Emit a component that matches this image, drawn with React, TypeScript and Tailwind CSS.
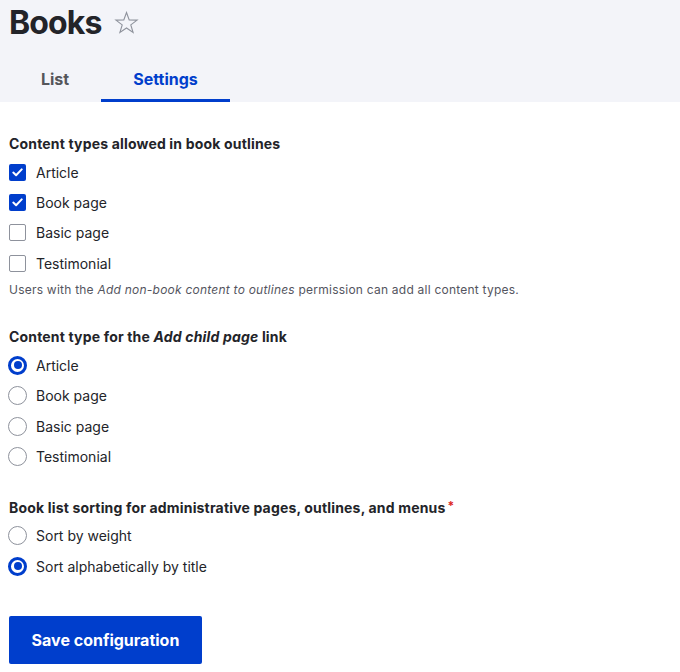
import React from "react";

const font = { fontFamily: "Inter, 'Noto Sans', sans-serif" };

function Checkbox({ checked }: { checked?: boolean }) {
  return checked ? (
    <div className="w-[17px] h-[17px] rounded-[2px] bg-[#003ecc] flex items-center justify-center shrink-0">
      <svg width="11" height="9" viewBox="0 0 11 9" fill="none">
        <path d="M1.3 4.6 L4.1 7.2 L9.7 1.4" stroke="white" strokeWidth="2" strokeLinecap="round" strokeLinejoin="round" />
      </svg>
    </div>
  ) : (
    <div className="w-[17px] h-[17px] rounded-[2px] border border-[#8e929c] bg-white shrink-0" />
  );
}

function Radio({ checked }: { checked?: boolean }) {
  return checked ? (
    <div className="w-[19px] h-[19px] rounded-full border-[3px] border-[#003ecc] flex items-center justify-center shrink-0">
      <div className="w-[8px] h-[8px] rounded-full bg-[#003ecc]" />
    </div>
  ) : (
    <div className="w-[19px] h-[19px] rounded-full border border-[#8e929c] bg-white shrink-0" />
  );
}

function Row({ children, label, radio }: { children: React.ReactNode; label: string; radio?: boolean }) {
  return (
    <div className={`h-[30.33px] flex items-center ${radio ? "gap-[9px] pl-[8px]" : "gap-[10px] pl-[9px]"}`}>
      {children}
      <span className="text-[14px] text-[#232429]">{label}</span>
    </div>
  );
}

export default function App() {
  return (
    <div className="w-[680px] h-[672px] bg-white overflow-hidden" style={font}>
      <div className="bg-[#f3f4f9] h-[102px] flex flex-col">
        <div className="flex items-center pl-[9px] pt-[5px] h-[40px]">
          <h1 className="text-[32px] font-bold leading-[38px] text-[#232429] tracking-[-0.9px]">Books</h1>
          <svg className="ml-[13px] mt-[1px]" width="25" height="24" viewBox="0 0 25 24" fill="none">
            <path
              d="M12.5 1.5 L15.2 8.9 L23.1 9.1 L16.8 13.9 L19.1 21.5 L12.5 17 L5.9 21.5 L8.2 13.9 L1.9 9.1 L9.8 8.9 Z"
              stroke="#8e929c"
              strokeWidth="1.1"
              strokeLinejoin="miter"
            />
          </svg>
        </div>
        <div className="flex pl-[9px] mt-auto">
          <div className="w-[92px] h-[48px] flex items-center justify-center text-[16px] font-bold text-[#55565b] pt-[2px]">List</div>
          <div className="w-[129px] h-[48px] flex flex-col">
            <div className="flex-1 flex items-center justify-center text-[16px] font-bold text-[#003ecc] pt-[5px]">Settings</div>
            <div className="h-[3px] bg-[#003ecc]" />
          </div>
        </div>
      </div>

      <div className="pt-[32px]">
        <div className="pl-[9px] h-[20px] leading-[20px] text-[14px] font-bold text-[#232429] tracking-[0.17px]">Content types allowed in book outlines</div>
        <div className="mt-[3px] flex flex-col">
          <Row label="Article"><Checkbox checked /></Row>
          <Row label="Book page"><Checkbox checked /></Row>
          <Row label="Basic page"><Checkbox /></Row>
          <Row label="Testimonial"><Checkbox /></Row>
        </div>
        <div className="pl-[9px] mt-[3px] h-[18px] leading-[18px] text-[12px] text-[#545560] tracking-[0.23px]">
          Users with the <em>Add non-book content to outlines</em> permission can add all content types.
        </div>

        <div className="mt-[28px] pl-[9px] h-[20px] leading-[20px] text-[14px] font-bold text-[#232429] tracking-[0.17px]">
          Content type for the <em>Add child page</em> link
        </div>
        <div className="mt-[3px] flex flex-col">
          <Row radio label="Article"><Radio checked /></Row>
          <Row radio label="Book page"><Radio /></Row>
          <Row radio label="Basic page"><Radio /></Row>
          <Row radio label="Testimonial"><Radio /></Row>
        </div>

        <div className="mt-[26px] pl-[9px] h-[20px] leading-[20px] text-[14px] font-bold text-[#232429] tracking-[0.17px] flex">
          Book list sorting for administrative pages, outlines, and menus
          <span className="text-[#dc2323] text-[12px] leading-[16px] ml-[2px]">*</span>
        </div>
        <div className="mt-[3px] flex flex-col">
          <Row radio label="Sort by weight"><Radio /></Row>
          <Row radio label="Sort alphabetically by title"><Radio checked /></Row>
        </div>

        <div className="pl-[9px] mt-[35px]">
          <button className="h-[48px] w-[193px] bg-[#003ecc] rounded-[2px] text-white text-[16px] font-bold">
            Save configuration
          </button>
        </div>
      </div>
    </div>
  );
}
